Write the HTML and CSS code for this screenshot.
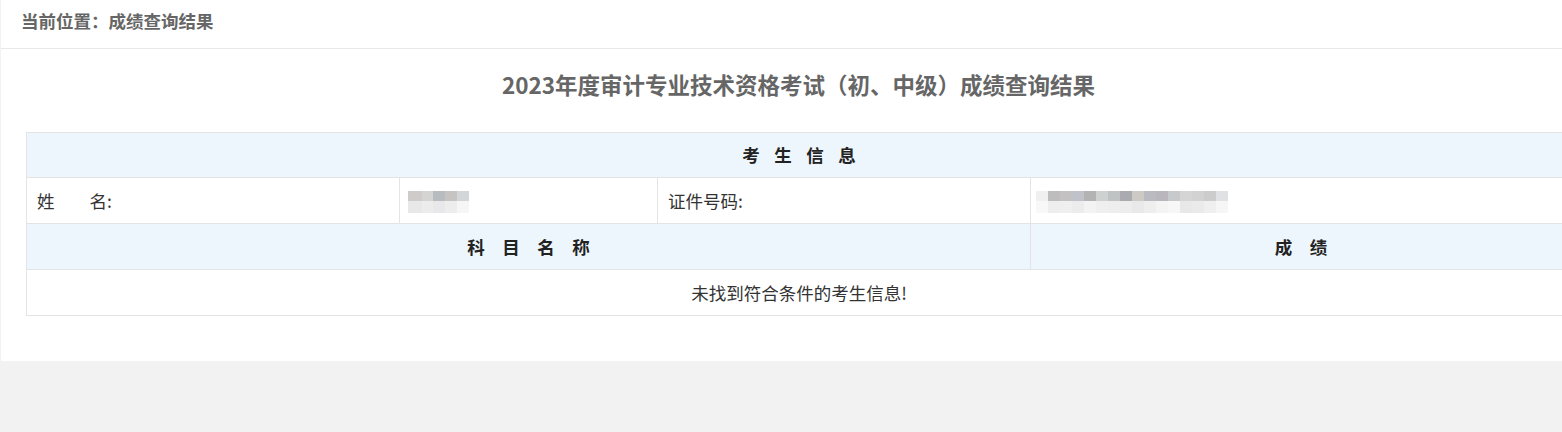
FILE: index.html
```html
<!DOCTYPE html>
<html lang="zh-CN">
<head>
    <meta charset="UTF-8">
    <title>成绩查询结果</title>
    <link rel="stylesheet" href="styles.css">
</head>
<body>
    <div class="panel">
        <div class="crumb">当前位置：成绩查询结果</div>

        <div class="content">
            <h1 class="title">2023年度审计专业技术资格考试（初、中级）成绩查询结果</h1>

            <table class="score-table">
                <colgroup>
                    <col class="c1">
                    <col class="c2">
                    <col class="c3">
                    <col class="c4">
                </colgroup>
                <tr class="head first">
                    <td colspan="4" class="center"><span class="spaced">考生信息</span></td>
                </tr>
                <tr>
                    <td>姓<span class="gap"></span>名:</td>
                    <td><div class="mosaic mosaic-name"></div></td>
                    <td>证件号码:</td>
                    <td><div class="mosaic mosaic-id"></div></td>
                </tr>
                <tr class="head">
                    <td colspan="3" class="center"><span class="spaced wide">科目名称</span></td>
                    <td class="center"><span class="spaced wide">成绩</span></td>
                </tr>
                <tr>
                    <td colspan="4" class="center">未找到符合条件的考生信息!</td>
                </tr>
            </table>
        </div>
    </div>
</body>
</html>
```

FILE: styles.css
```css
html, body {
    margin: 0;
    padding: 0;
}
body {
    background-color: #f2f2f2;
    font-family: "Noto Sans CJK SC", "Noto Sans", sans-serif;
    font-size: 17.5px;
    color: #333;
    overflow: hidden;
    height: 432px;
}
.panel {
    background-color: #fff;
    margin-left: 1px;
    width: 1595px;
    height: 361px;
}
.crumb {
    padding: 8px 20px 14px;
    line-height: 26px;
    font-weight: bold;
    color: #666;
    border-bottom: 1px solid #e8e8e8;
}
.content {
    padding: 0 25px;
}
.title {
    margin: 0;
    padding-top: 20px;
    padding-bottom: 33px;
    line-height: 30px;
    font-size: 22.5px;
    font-weight: bold;
    color: #666;
    text-align: center;
}
.score-table {
    width: 1545px;
    border-collapse: collapse;
    table-layout: fixed;
}
.c1 { width: 373px; }
.c2 { width: 258px; }
.c3 { width: 373px; }
.c4 { width: 541px; }
.score-table td {
    border: 1px solid #e4e4e4;
    height: 45px;
    padding: 0 10px;
    line-height: 20px;
    vertical-align: middle;
}
.score-table tr.first td {
    height: 44px;
}
.score-table tr.head td {
    background-color: #eef6fd;
    font-weight: bold;
    color: #222;
}
.score-table td.center {
    text-align: center;
}
.spaced {
    letter-spacing: 14.5px;
    margin-right: -14.5px;
}
.spaced.wide {
    letter-spacing: 17.5px;
    margin-right: -17.5px;
}
.gap {
    display: inline-block;
    width: 35px;
}

/* blurred personal data */
.mosaic {
    height: 22px;
    background-repeat: no-repeat;
    background-size: 100% 10px, 100% 12px;
    background-position: 0 0, 0 10px;
}
.mosaic-name {
    width: 61px;
    margin-left: -2px;
    margin-top: 3px;
    background-image:
        linear-gradient(to right, #cfcbcb 0 14px, #d6d3d3 14px 25px, #b7bcc1 25px 37px, #c7c3c3 37px 49px, #d3d6d9 49px 61px),
        linear-gradient(to right, #e9e8e8 0 14px, #ececec 14px 25px, #e8e8ea 25px 37px, #ededed 37px 49px, #f6f6f6 49px 61px);
}
.mosaic-id {
    width: 192px;
    margin-left: -5px;
    margin-top: 3px;
    background-image:
        linear-gradient(to right, #f0f0f0 0 12px, #bdbdbd 12px 24px, #c3c1c1 24px 36px, #bfc3c9 36px 48px, #b3b3b3 48px 60px, #cfd1d0 60px 72px, #bfc3c3 72px 84px, #a9abb0 84px 96px, #cdc9c5 96px 108px, #b9bbc0 108px 120px, #b9b7bb 120px 132px, #c7cacc 132px 144px, #d5d5d5 144px 156px, #d2d2d2 156px 168px, #cccccc 168px 180px, #e0e1e5 180px 192px),
        linear-gradient(to right, #f8f8f8 0 12px, #eeeeee 12px 24px, #efefef 24px 36px, #ececec 36px 48px, #f3f3f3 48px 60px, #efefef 60px 72px, #eeeeee 72px 84px, #ededed 84px 96px, #e9e9e9 96px 108px, #eeeeee 108px 120px, #f4f4f4 120px 132px, #f7f7f7 132px 144px, #e8e8e8 144px 156px, #eaeaea 156px 168px, #efefef 168px 180px, #f6f6f6 180px 192px);
}
```
